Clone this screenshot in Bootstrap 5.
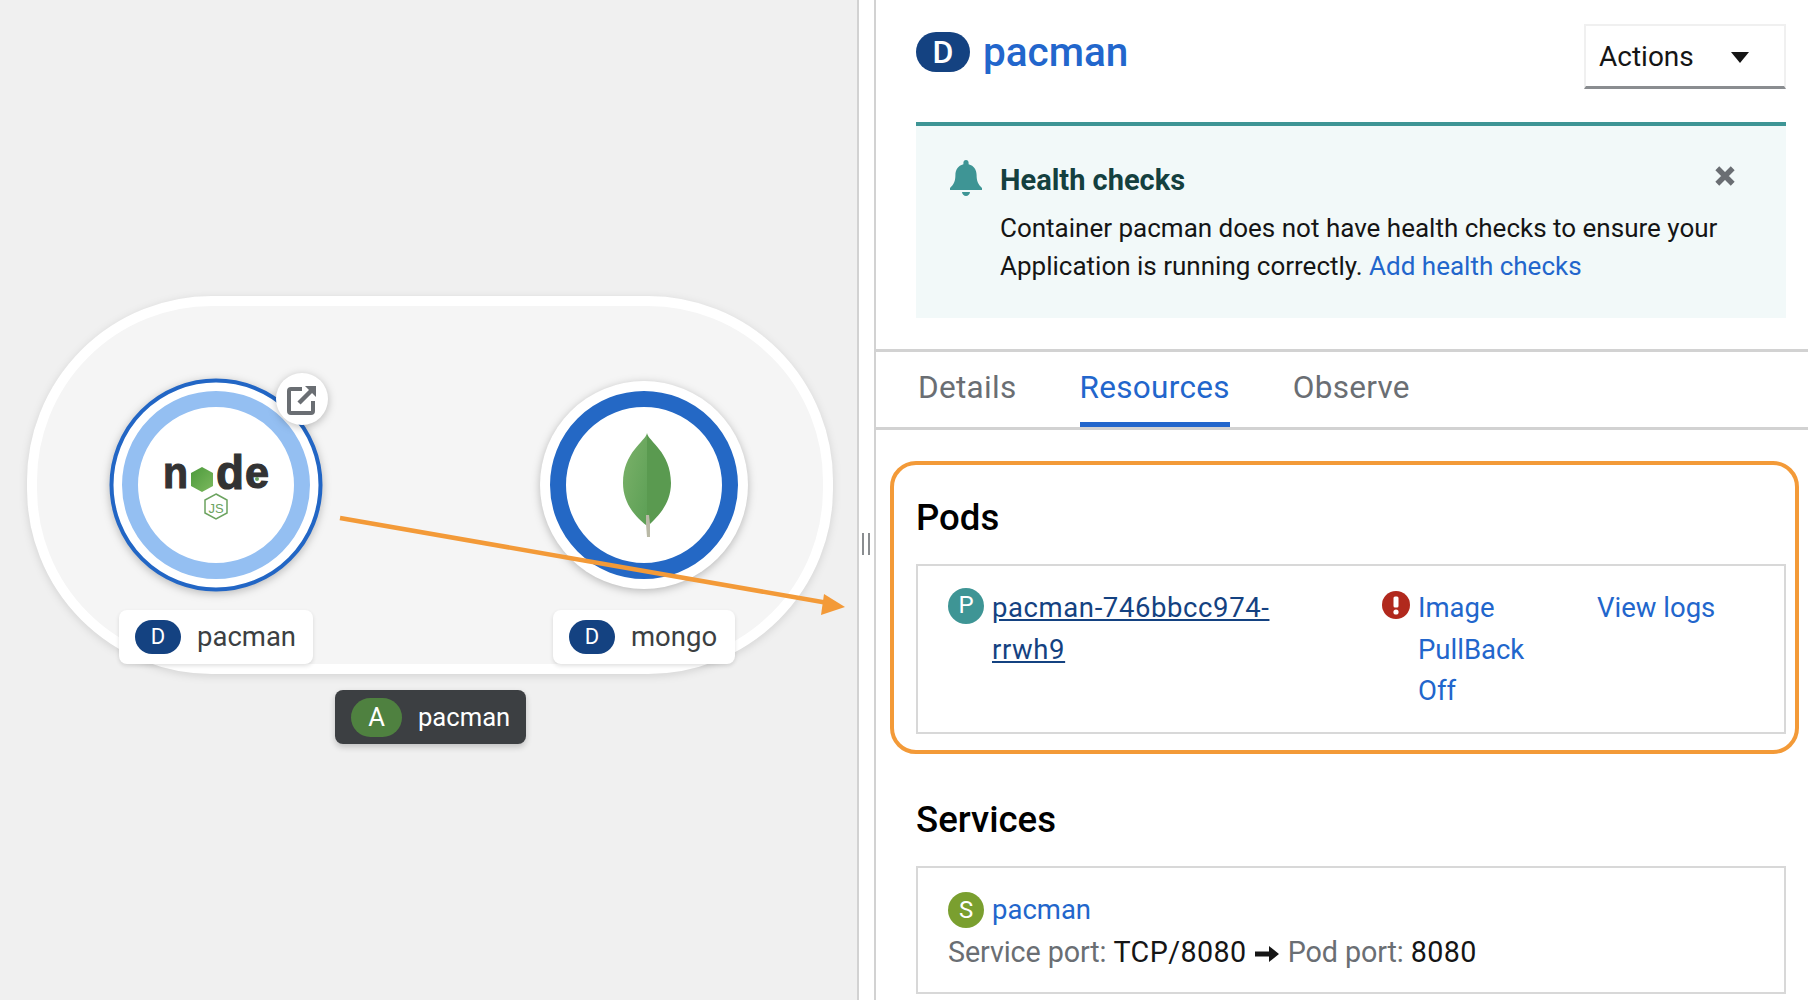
<!DOCTYPE html>
<html lang="en">
<head>
  <meta charset="UTF-8">
  <meta name="viewport" content="width=device-width, initial-scale=1.0">
  <title>pacman - Topology</title>
  <link href="https://cdn.jsdelivr.net/npm/bootstrap@5.3.0/dist/css/bootstrap.min.css" rel="stylesheet">
  <style>
    body {
      height: 100vh;
      overflow: hidden;
      font-family: Roboto, "Liberation Sans", sans-serif;
      font-size: 26px;
      line-height: 38.4px;
      color: #151515;
    }

    /* topology canvas */
    .topo-pane {
      width: 859px;
      background: #f0f0f0;
      border-right: 2px solid #d2d2d2;
    }
    .topo-svg { display: block; width: 857px; height: 1000px; }
    .group-shape { filter: drop-shadow(0 2px 4px rgba(0,0,0,.12)); }
    .node-shadow { filter: drop-shadow(0 2px 4px rgba(0,0,0,.25)); }
    .logo-letter { font-family: "Liberation Sans", sans-serif; font-weight: 700; fill: #333; stroke: #333; stroke-width: 1.2px; }
    .logo-js { font-family: "Liberation Sans", sans-serif; font-size: 13px; fill: #6ba35f; }

    .node-label {
      position: absolute;
      top: 610px;
      height: 54px;
      gap: 16px;
      padding: 0 16px;
      background: #fff;
      border-radius: 8px;
      box-shadow: 0 2px 4px rgba(0,0,0,.12);
      font-size: 27.5px;
      color: #3c3f42;
    }
    .label-pacman { left: 119px; width: 194px; }
    .label-mongo { left: 553px; width: 182px; }
    .label-app {
      left: 335px;
      top: 690px;
      width: 191px;
      background: #3c3f42;
      color: #fff;
      font-size: 25.6px;
      box-shadow: 0 3px 6px rgba(0,0,0,.2);
    }

    .kind-badge {
      display: inline-flex;
      flex-shrink: 0;
      align-items: center;
      justify-content: center;
      color: #fff;
    }
    .kind-d { width: 46px; height: 34px; border-radius: 17px; background: #144281; font-size: 22px; }
    .kind-a { width: 51px; height: 39px; border-radius: 20px; background: #4f8140; font-size: 25.6px; }
    .kind-d-lg { width: 54px; height: 40px; border-radius: 20px; background: #144281; font-size: 32px; font-weight: 500; }
    .kind-p { width: 36px; height: 36px; border-radius: 50%; background: #3e9595; font-size: 24px; }
    .kind-s { width: 36px; height: 36px; border-radius: 50%; background: #7a9f2f; font-size: 24px; }

    /* sash between the panes */
    .sash { width: 17px; border-right: 2px solid #d2d2d2; }
    .sash-grip { width: 8px; height: 22px; margin-top: 533px; margin-left: 3px; border-left: 2px solid #8a8d90; border-right: 2px solid #8a8d90; }

    /* side panel */
    .side-panel { min-width: 0; }
    .panel-head { height: 122px; padding: 24px 22px 0 40px; }
    .panel-title { font-size: 40.500px; line-height: 48px; font-weight: 500; color: #2266cc; margin-top: 4px; }
    .panel-title .kind-badge { margin-right: 13px; }
    .actions-btn {
      width: 202px;
      height: 65px;
      padding: 2px 13px 0;
      border: 2px solid #f0f0f0;
      border-bottom: 3px solid #8a8d90;
      border-radius: 0;
      background: #fff;
      font-size: 28px;
      color: #151515;
    }
    .caret-down { width: 0; height: 0; margin-right: 22px; border-left: 9px solid transparent; border-right: 9px solid transparent; border-top: 11px solid #151515; }

    .health-alert {
      height: 196px;
      margin: 0 22px 0 40px;
      padding: 34px 20px 0 34px;
      border-top: 4px solid #3e9595;
      background: #f2f9f9;
    }
    .health-icon { width: 32px; height: 36px; margin-right: 18px; flex-shrink: 0; }
    .health-main { min-width: 0; }
    .health-title { font-weight: 700; font-size: 29px; line-height: 38px; color: #14403f; margin: 1px 0 10px; }
    .health-text { white-space: nowrap; }
    .close-x { width: 22px; height: 22px; margin-top: 5px; margin-right: 30px; flex-shrink: 0; }
    a { color: #2266cc; text-decoration: none; }

    .tab-bar {
      height: 81px;
      margin-top: 31px;
      padding-left: 42px;
      gap: 63px;
      border-top: 3px solid #d2d2d2;
      border-bottom: 3px solid #d2d2d2;
      font-size: 31.5px;
      letter-spacing: .3px;
      color: #6a6e73;
    }
    .tab-item { height: 75px; line-height: 72px; }
    .tab-on { color: #2266cc; border-bottom: 5px solid #2266cc; }

    .res-body { padding: 0 22px 0 40px; }
    .pods-mark {
      margin: 31px -13px 0 -26px;
      padding: 29px 13px 16px 26px;
      height: 293px;
      border: 4px solid #f39a38;
      border-radius: 26px;
    }
    .pods-mark .res-head { margin-left: -4px; margin-bottom: 22px; }
    .pods-mark .res-box { margin-left: -4px; margin-right: -4px; }
    .res-head { font-size: 36.6px; line-height: 48px; font-weight: 500; color: #000; margin: 0 0 23px; }
    .res-box { border: 2px solid #d8d8d8; padding: 21px 30px; font-size: 27.5px; line-height: 41.5px; }
    .pod-box { height: 170px; }
    .svc-box { height: 128px; line-height: 40px; padding-top: 22px; }
    .svc-head { margin-top: 42px; margin-bottom: 22px; }
    .pod-name { width: 434px; }
    .pod-name .kind-badge { margin-right: 8px; margin-top: 1px; }
    .pod-name a { color: #144281; text-decoration: underline; width: 290px; letter-spacing: .6px; }
    .pod-status { width: 215px; }
    .err-icon { width: 28px; height: 28px; margin: 4px 8px 0 0; flex-shrink: 0; }
    .pod-status a { width: 120px; }
    .port-line { font-size: 28.7px; margin-top: 2px; }
    .port-key { color: #6a6e73; letter-spacing: -.1px; }
    .port-val { letter-spacing: .4px; }
    .port-arrow { width: 25px; height: 18px; margin: 0 1px; vertical-align: -1px; }
    .svc-link .kind-badge { margin-right: 8px; }
  </style>
</head>
<body class="d-flex">

<div class="topo-pane position-relative flex-shrink-0">
  <svg class="topo-svg" viewBox="0 0 857 1000">
    <defs>
      <linearGradient id="leafL" x1="0" y1="0" x2="1" y2="1">
        <stop offset="0" stop-color="#7cb26a"/>
        <stop offset="1" stop-color="#5c9f55"/>
      </linearGradient>
      <linearGradient id="hexGreen" x1="0" y1="0" x2="1" y2="1">
        <stop offset="0" stop-color="#4c9a3c"/>
        <stop offset="1" stop-color="#7cb95e"/>
      </linearGradient>
    </defs>

    <rect class="group-shape" x="32" y="301" width="796" height="368" rx="180" fill="#f5f5f5" stroke="#fff" stroke-width="10"/>

    <!-- pacman node -->
    <g class="node-shadow">
      <circle cx="216" cy="485" r="104.5" fill="#fff" stroke="#2266c5" stroke-width="4"/>
    </g>
    <circle cx="216" cy="485" r="86" fill="#fff" stroke="#94bff2" stroke-width="16"/>
    <text class="logo-letter" x="163" y="488" font-size="44" textLength="25" lengthAdjust="spacingAndGlyphs">n</text>
    <polygon points="202,467 213,473 213,486 202,492 191,486 191,473" fill="url(#hexGreen)"/>
    <text class="logo-letter" x="216" y="489" font-size="48" textLength="28" lengthAdjust="spacingAndGlyphs">d</text>
    <text class="logo-letter" x="245" y="488" font-size="44" textLength="24" lengthAdjust="spacingAndGlyphs">e</text>
    <circle cx="257" cy="479" r="2" fill="#6ba35f"/>
    <polygon points="216,494 227,500 227,513 216,519 205,513 205,500" fill="none" stroke="#6ba35f" stroke-width="1.5"/>
    <text class="logo-js" x="216" y="513" text-anchor="middle">JS</text>

    <!-- external link -->
    <g class="node-shadow">
      <circle cx="302" cy="399" r="26" fill="#fff"/>
    </g>
    <path d="M302 389h-11a2 2 0 0 0-2 2v20a2 2 0 0 0 2 2h20a2 2 0 0 0 2-2v-10" fill="none" stroke="#6a6e73" stroke-width="4"/>
    <path d="M299 403l15-15" fill="none" stroke="#6a6e73" stroke-width="4.5"/>
    <polygon points="305,386 316,386 316,397" fill="#6a6e73"/>

    <!-- mongo node -->
    <g class="node-shadow">
      <circle cx="644" cy="485" r="104" fill="#fff"/>
    </g>
    <circle cx="644" cy="485" r="86" fill="#fff" stroke="#2468c5" stroke-width="16"/>
    <path d="M647 433C646 441 623 452 623 483C623 505 638 519 646 525L647 525Z" fill="url(#leafL)"/>
    <path d="M647 433C648 441 671 452 671 483C671 505 656 518 650 524L647 525Z" fill="#5a9a50"/>
    <path d="M646 515h3l1 9v13h-3l-1-13z" fill="#b9b9a6"/>

    <!-- annotation arrow -->
    <line x1="340" y1="518" x2="828" y2="603" stroke="#f39a38" stroke-width="4.5"/>
    <polygon points="845,607 824,594 821,615" fill="#f39a38"/>
  </svg>

  <div class="node-label label-pacman d-flex align-items-center"><span class="kind-badge kind-d">D</span><span>pacman</span></div>
  <div class="node-label label-mongo d-flex align-items-center"><span class="kind-badge kind-d">D</span><span>mongo</span></div>
  <div class="node-label label-app d-flex align-items-center"><span class="kind-badge kind-a">A</span><span>pacman</span></div>
</div>

<div class="sash flex-shrink-0"><div class="sash-grip"></div></div>

<div class="side-panel flex-grow-1">
  <div class="panel-head d-flex justify-content-between align-items-start">
    <div class="panel-title d-flex align-items-center"><span class="kind-badge kind-d-lg">D</span>pacman</div>
    <button type="button" class="btn actions-btn d-flex align-items-center justify-content-between">Actions<span class="caret-down"></span></button>
  </div>

  <div class="health-alert d-flex">
    <svg class="health-icon" viewBox="0 0 32 36">
      <path d="M16 0c1.6 0 2.6 1.2 2.6 2.8v1.4C24 5.6 26.600 10 26.600 15c0 6 1.400 9 5.400 13v2H0v-2c4-4 5.400-7 5.400-13 0-5 2.600-9.400 8-10.800V2.800C13.400 1.200 14.400 0 16 0zM12 32h8c0 2-2 4-4 4s-4-2-4-4z" fill="#3e9595"/>
    </svg>
    <div class="health-main flex-grow-1">
      <div class="health-title">Health checks</div>
      <div class="health-text">Container pacman does not have health checks to ensure your<br>Application is running correctly. <a href="#">Add health checks</a></div>
    </div>
    <svg class="close-x" viewBox="0 0 20 20"><path d="M3 3l14 14M17 3L3 17" stroke="#6a6e73" stroke-width="5" fill="none"/></svg>
  </div>

  <div class="tab-bar d-flex">
    <div class="tab-item">Details</div>
    <div class="tab-item tab-on">Resources</div>
    <div class="tab-item">Observe</div>
  </div>

  <div class="res-body">
    <div class="pods-mark">
      <h2 class="res-head">Pods</h2>
      <div class="res-box pod-box d-flex">
        <div class="pod-name d-flex align-items-start">
          <span class="kind-badge kind-p">P</span>
          <a href="#">pacman-746bbcc974-rrwh9</a>
        </div>
        <div class="pod-status d-flex align-items-start">
          <svg class="err-icon" viewBox="0 0 28 28">
            <circle cx="14" cy="14" r="14" fill="#b1291d"/>
            <rect x="11.500" y="5.500" width="5" height="11" rx="1.500" fill="#fff"/>
            <circle cx="14" cy="21" r="2.600" fill="#fff"/>
          </svg>
          <a href="#">Image PullBack Off</a>
        </div>
        <a href="#">View logs</a>
      </div>
    </div>

    <h2 class="res-head svc-head">Services</h2>
    <div class="res-box svc-box">
      <div class="svc-link d-flex align-items-center"><span class="kind-badge kind-s">S</span><a href="#">pacman</a></div>
      <div class="port-line"><span class="port-key">Service port:</span> <span class="port-val">TCP/8080</span> <svg class="port-arrow" viewBox="0 0 25 18"><path d="M0 6.500h14V1l10 8-10 8v-5.500H0z" fill="#151515"/></svg> <span class="port-key">Pod port:</span> <span class="port-val">8080</span></div>
    </div>
  </div>
</div>

<script src="https://cdn.jsdelivr.net/npm/bootstrap@5.3.0/dist/js/bootstrap.bundle.min.js"></script>
</body>
</html>
